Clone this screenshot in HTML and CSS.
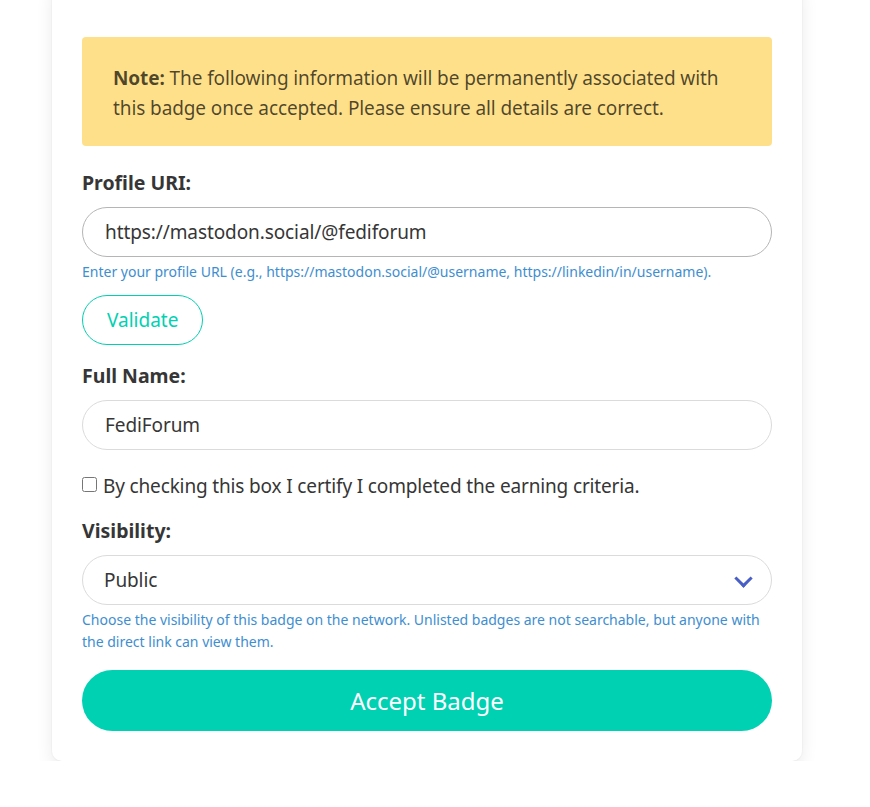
FILE: index.html
```html
<!DOCTYPE html>
<html lang="en">
<head>
    <meta charset="UTF-8">
    <meta name="viewport" content="width=device-width, initial-scale=1.0">
    <title>Accept Badge</title>
    <link rel="stylesheet" href="styles.css">
</head>
<body>
    <div class="page">
        <form class="box" id="acceptForm">
            <div class="notification">
                <strong>Note:</strong> The following information will be permanently associated with this badge once accepted. Please ensure all details are correct.
            </div>

            <div class="field">
                <label class="label" for="profileUri">Profile URI:</label>
                <input class="input hovered" type="text" id="profileUri" value="https://mastodon.social/@fediforum">
                <p class="help">Enter your profile URL (e.g., https://mastodon.social/@username, https://linkedin/in/username).</p>
            </div>

            <div class="field">
                <button type="button" class="btn-outline">Validate</button>
            </div>

            <div class="field name-field">
                <label class="label" for="fullName">Full Name:</label>
                <input class="input" type="text" id="fullName" value="FediForum">
            </div>

            <div class="field">
                <label class="checkbox">
                    <input type="checkbox" id="certify">
                    By checking this box I certify I completed the earning criteria.
                </label>
            </div>

            <div class="field">
                <label class="label" for="visibility">Visibility:</label>
                <div class="select">
                    <select id="visibility">
                        <option>Public</option>
                        <option>Unlisted</option>
                        <option>Private</option>
                    </select>
                </div>
                <p class="help">Choose the visibility of this badge on the network. Unlisted badges are not searchable, but anyone with the direct link can view them.</p>
            </div>

            <button type="submit" class="btn-primary">Accept Badge</button>
        </form>
    </div>
</body>
</html>
```

FILE: styles.css
```css
* {
    margin: 0;
    padding: 0;
    box-sizing: border-box;
}

body {
    background-color: white;
    font-family: "Noto Sans", "Open Sans", sans-serif;
    color: #363636;
    overflow: hidden;
}

.page {
    padding-left: 52px;
    margin-top: -23px;
}

.box {
    width: 750px;
    background-color: white;
    border-radius: 10px;
    box-shadow: 0 8px 18px -2px rgba(10,10,10,0.1), 0 0 0 1px rgba(10,10,10,0.02);
    padding: 60px 30px 30px;
}

.notification {
    background-color: #ffe08a;
    color: rgba(0,0,0,0.7);
    border-radius: 4px;
    padding: 26px 30px 23px 31px;
    font-size: 19px;
    letter-spacing: -0.1px;
    line-height: 30px;
    margin-bottom: 22px;
}

.field {
    margin-bottom: 12px;
}

.name-field {
    margin-top: 16px;
}

.label {
    display: block;
    font-size: 19.5px;
    font-weight: 700;
    line-height: 30px;
    color: #363636;
    margin-bottom: 9px;
}

.input,
.select select {
    width: 100%;
    height: 50px;
    border: 1px solid #dbdbdb;
    border-radius: 9999px;
    padding: 0 22px;
    font-family: inherit;
    font-size: 19px;
    letter-spacing: -0.1px;
    color: #363636;
    background-color: white;
    outline: none;
}

.input.hovered {
    border-color: #b5b5b5;
}

.help {
    font-size: 14px;
    line-height: 22px;
    color: #3e8ed0;
    margin-top: 4px;
}

.btn-outline {
    height: 50px;
    padding: 0 24px;
    border: 1px solid #00d1b2;
    border-radius: 9999px;
    background: white;
    color: #00d1b2;
    font-family: inherit;
    font-size: 19px;
    cursor: pointer;
}

.checkbox {
    display: flex;
    align-items: center;
    gap: 6px;
    font-size: 19px;
    letter-spacing: -0.15px;
    line-height: 30px;
    margin-top: 21px;
    margin-bottom: 15px;
}

.checkbox input {
    width: 15px;
    height: 15px;
    margin-top: -3px;
}

.select {
    position: relative;
}

.select select {
    appearance: none;
    padding-left: 21px;
}

.select::after {
    content: "";
    position: absolute;
    right: 22px;
    top: 17px;
    width: 10px;
    height: 10px;
    border: 3px solid #485fc7;
    border-top: 0;
    border-right: 0;
    transform: rotate(-45deg);
    pointer-events: none;
}

.btn-primary {
    display: block;
    width: 100%;
    height: 61px;
    margin-top: 17px;
    border: none;
    border-radius: 9999px;
    background-color: #00d1b2;
    color: white;
    font-family: inherit;
    font-size: 24px;
    cursor: pointer;
}
```
